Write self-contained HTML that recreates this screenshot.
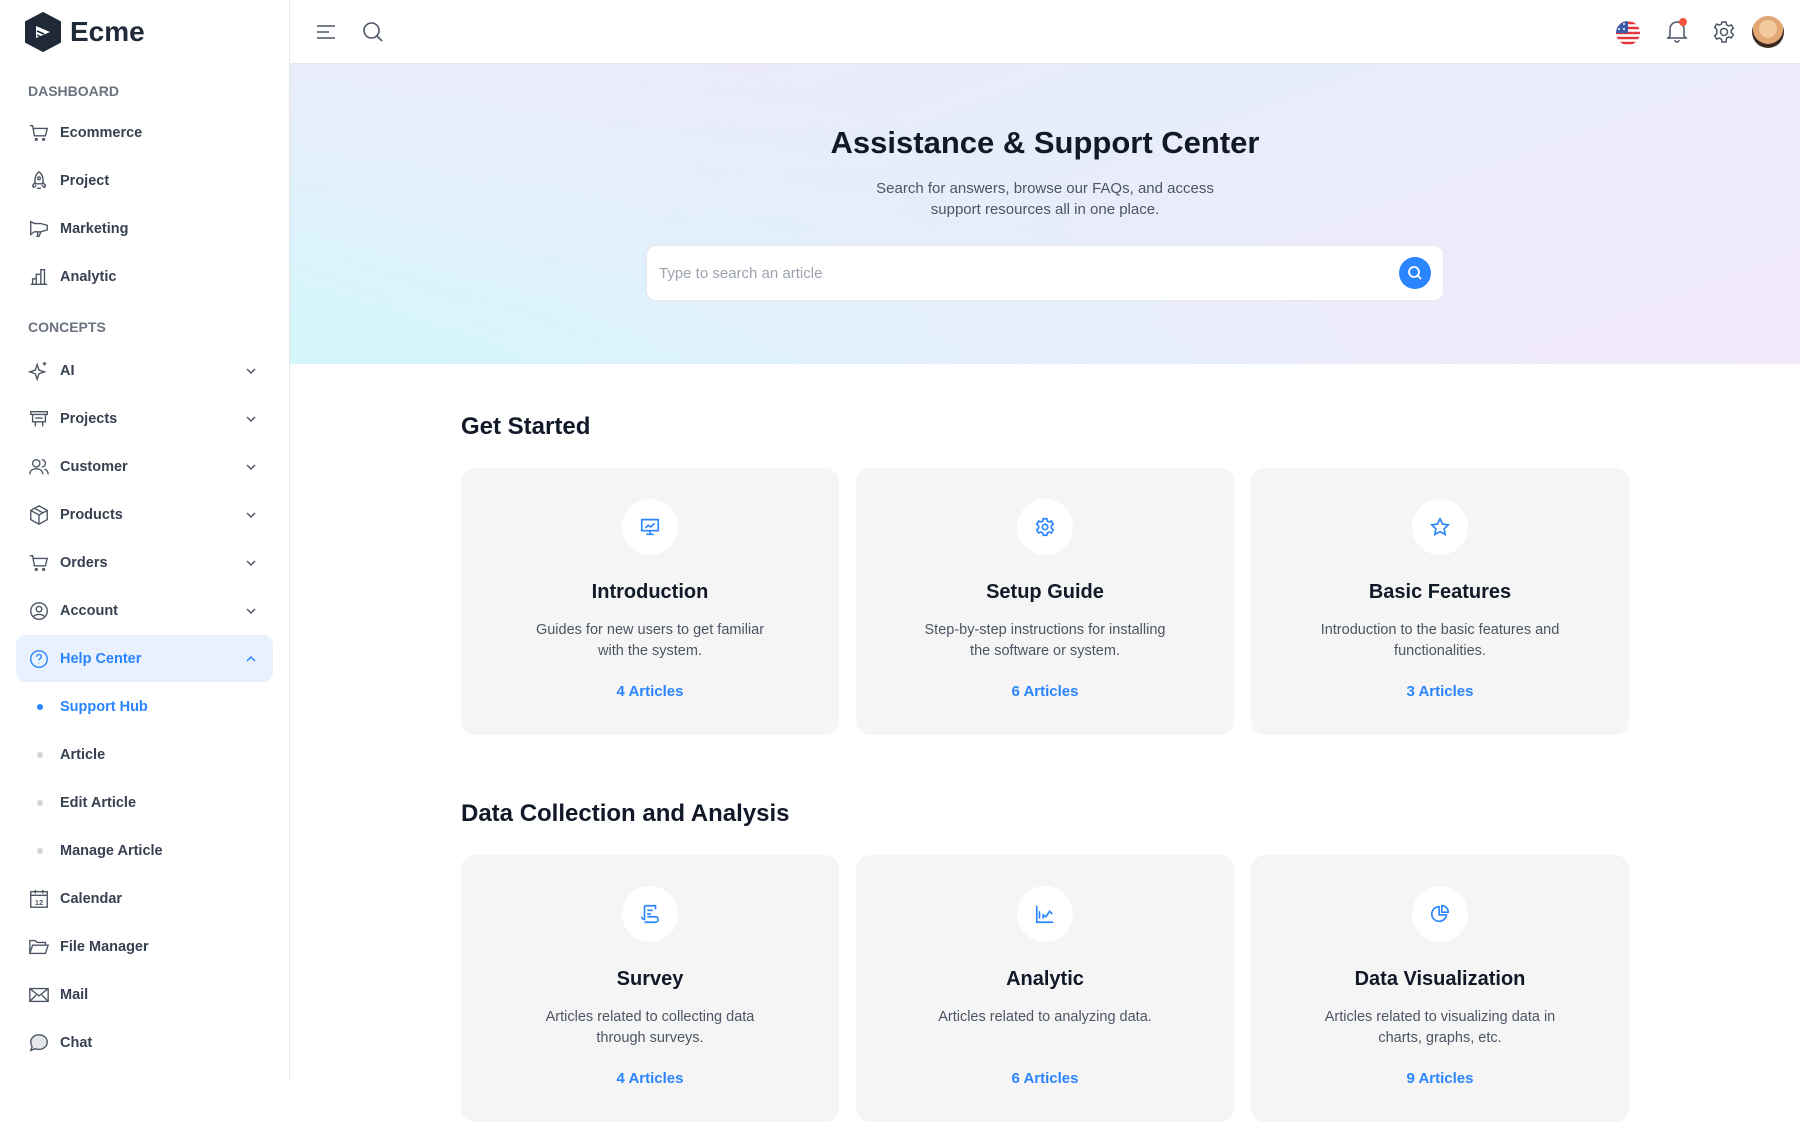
<!DOCTYPE html>
<html><head><meta charset="utf-8"><style>
*{box-sizing:border-box;margin:0;padding:0}
body{width:1800px;height:1080px;overflow:hidden;font-family:"Liberation Sans",sans-serif;background:#fff;position:relative;color:#111827}
.sb{position:absolute;left:0;top:0;width:290px;height:1080px;border-right:1px solid #e5e7eb;background:#fff}
.logo{position:absolute;left:24px;top:12px;display:flex;align-items:center;gap:8px;font-weight:bold;font-size:28px;color:#1f2937}
.sec{position:absolute;left:28px;font-size:14px;font-weight:bold;color:#6b7280;transform:translateY(-50%)}
.it{position:absolute;left:28px;width:240px;height:24px;transform:translateY(-50%);display:flex;align-items:center;font-size:14.5px;font-weight:bold;color:#374151}
.it svg{width:22px;height:22px;margin-right:10px;fill:none;stroke:#4b5563;stroke-width:1.5}
.it .ch{position:absolute;right:10px;width:14px;height:14px;margin:0}
.dot{width:6px;height:6px;border-radius:3px;background:#d1d5db;margin:0 17px 0 9px}
.hl{position:absolute;left:16px;top:635px;width:257px;height:47px;background:#e8f1fd;border-radius:10px}
.hd{position:absolute;left:290px;top:0;right:0;height:64px;border-bottom:1px solid #e5e7eb;background:#fff}
.hero{position:absolute;left:290px;top:64px;right:0;height:300px;background:linear-gradient(160deg,#efe9fb 0%,#e6ecfc 40%,#f2eafb 100%)}
.hero:before{content:"";position:absolute;inset:0;background:linear-gradient(20deg,#d3f6fb 0%,rgba(220,245,252,0.4) 30%,rgba(255,255,255,0) 55%)}
.h1{position:absolute;left:290px;right:0;text-align:center;font-weight:bold;font-size:31px;top:125px;color:#111827}
.sub{position:absolute;left:290px;right:0;text-align:center;top:178px;font-size:15px;line-height:21px;color:#4b5563}
.srch{position:absolute;left:646px;top:245px;width:798px;height:56px;background:#fff;border:1px solid #e5e7eb;border-radius:10px}
.srch span{position:absolute;left:12px;top:19px;font-size:15px;color:#9ca3af}
.srch .b{position:absolute;right:12px;top:11px;width:32px;height:32px;border-radius:16px;background:#2a85ff}
.h2{position:absolute;left:461px;font-size:24px;font-weight:bold;color:#111827;transform:translateY(-50%)}
.card{position:absolute;width:378px;height:267px;background:#f5f5f5;border-radius:14px;text-align:center}
.card .ic{position:absolute;left:161px;top:31px;width:56px;height:56px;border-radius:28px;background:#fff;display:flex;align-items:center;justify-content:center}
.card .ic svg{width:22px;height:22px;fill:none;stroke:#2a85ff;stroke-width:1.8}
.card .t{position:absolute;left:0;right:0;top:113px;font-size:20px;font-weight:bold;color:#111827}
.card .d{position:absolute;left:68px;right:68px;top:152px;font-size:14.5px;line-height:21px;color:#4b5563}
.card .a{position:absolute;left:0;right:0;top:215px;font-size:15px;font-weight:bold;color:#2a85ff}
</style></head><body>
<div class="sb">
<div class="logo"><svg width="38" height="40" viewBox="0 0 38 40"><path d="M19 1L36 10V30L19 39L2 30V10Z" fill="#1f2937" stroke="#1f2937" stroke-width="2" stroke-linejoin="round"/><path d="M12 14L26 20L12 26Z" fill="#fff"/><path d="M13 19l7 3M13 23l4 2" stroke="#1f2937" stroke-width="1.5"/></svg>Ecme</div>
<div class="sec" style="top:91px">DASHBOARD</div>
<div class="it" style="top:133px"><svg viewBox="0 0 24 24"><path d="M2 4h3l2 11h12l2-8H6"/><circle cx="9" cy="19" r="1"/><circle cx="17" cy="19" r="1"/></svg>Ecommerce</div>
<div class="it" style="top:181px"><svg viewBox="0 0 24 24"><path d="M12 2c4 3 5 8 4 13H8C7 10 8 5 12 2zM8 13l-3 4 1 2 3-2M16 13l3 4-1 2-3-2M10 20h4"/><circle cx="12" cy="9" r="1.5"/></svg>Project</div>
<div class="it" style="top:229px"><svg viewBox="0 0 24 24"><path d="M3 4v14l4-3h7l7-2V8l-7-2H7L3 4zM14 15l-2 5h-2l1-5"/></svg>Marketing</div>
<div class="it" style="top:277px"><svg viewBox="0 0 24 24"><path d="M3 20h18M5 20v-6h4v6M9 20V9h5v11M14 20V4h4v16"/></svg>Analytic</div>
<div class="sec" style="top:327px">CONCEPTS</div>
<div class="it" style="top:371px"><svg viewBox="0 0 24 24"><path d="M10 5l2 6 6 2-6 2-2 6-2-6-6-2 6-2zM18 2v4M16 4h4"/></svg>AI<svg class="ch" viewBox="0 0 14 14"><path d="M3 5l4 4 4-4"/></svg></div>
<div class="it" style="top:419px"><svg viewBox="0 0 24 24"><path d="M3 4h18v3H3zM5 7v8h14V7M8 15v5M16 15v5M8 11h8"/></svg>Projects<svg class="ch" viewBox="0 0 14 14"><path d="M3 5l4 4 4-4"/></svg></div>
<div class="it" style="top:467px"><svg viewBox="0 0 24 24"><circle cx="9" cy="8" r="4"/><path d="M2 20c0-4 3-6 7-6s7 2 7 6M15 4a4 4 0 010 8M18 14c2 1 4 3 4 6"/></svg>Customer<svg class="ch" viewBox="0 0 14 14"><path d="M3 5l4 4 4-4"/></svg></div>
<div class="it" style="top:515px"><svg viewBox="0 0 24 24"><path d="M12 2l9 5v10l-9 5-9-5V7zM3 7l9 5 9-5M12 12v10M7 4.5l9 5"/></svg>Products<svg class="ch" viewBox="0 0 14 14"><path d="M3 5l4 4 4-4"/></svg></div>
<div class="it" style="top:563px"><svg viewBox="0 0 24 24"><path d="M2 4h3l2 11h12l2-8H6"/><circle cx="9" cy="19" r="1"/><circle cx="17" cy="19" r="1"/></svg>Orders<svg class="ch" viewBox="0 0 14 14"><path d="M3 5l4 4 4-4"/></svg></div>
<div class="it" style="top:611px"><svg viewBox="0 0 24 24"><circle cx="12" cy="12" r="9"/><circle cx="12" cy="10" r="3"/><path d="M6 18c2-3 10-3 12 0"/></svg>Account<svg class="ch" viewBox="0 0 14 14"><path d="M3 5l4 4 4-4"/></svg></div>
<div class="hl"></div>
<div class="it" style="top:659px;color:#2a85ff"><svg viewBox="0 0 24 24" style="stroke:#2a85ff"><circle cx="12" cy="12" r="9"/><path d="M9.5 9.5a2.5 2.5 0 115 0c0 2-2.5 2-2.5 4M12 17v.5"/></svg>Help Center<svg class="ch" viewBox="0 0 14 14" style="stroke:#2a85ff"><path d="M3 9l4-4 4 4"/></svg></div>
<div class="it" style="top:707px;color:#2a85ff"><span class="dot" style="background:#2a85ff"></span>Support Hub</div>
<div class="it" style="top:755px"><span class="dot"></span>Article</div>
<div class="it" style="top:803px"><span class="dot"></span>Edit Article</div>
<div class="it" style="top:851px"><span class="dot"></span>Manage Article</div>
<div class="it" style="top:899px"><svg viewBox="0 0 24 24"><rect x="3" y="4" width="18" height="17"/><path d="M3 8h18M8 2v4M16 2v4"/><text x="12" y="18.5" font-size="8" text-anchor="middle" fill="#4b5563" stroke="none">12</text></svg>Calendar</div>
<div class="it" style="top:947px"><svg viewBox="0 0 24 24"><path d="M2 19V5h6l2 2h9v3M2 19l3-9h17l-3 9z"/></svg>File Manager</div>
<div class="it" style="top:995px"><svg viewBox="0 0 24 24"><rect x="2" y="5" width="20" height="14"/><path d="M2 5l10 8 10-8M2 19l7-7M22 19l-7-7"/></svg>Mail</div>
<div class="it" style="top:1043px"><svg viewBox="0 0 24 24"><path d="M12 3c5 0 9 3.5 9 8s-4 8-9 8c-1.5 0-3-.3-4-.8L3 20l1.5-4C3.5 14.5 3 13 3 11c0-4.5 4-8 9-8z" fill="#e5e7eb"/></svg>Chat</div>
</div>
<div class="hd">
<svg style="position:absolute;left:26px;top:22px" width="20" height="20" viewBox="0 0 20 20" fill="none" stroke="#4b5563" stroke-width="1.6"><path d="M1 4h18M1 10h12M1 16h18"/></svg>
<svg style="position:absolute;left:72px;top:21px" width="22" height="22" viewBox="0 0 22 22" fill="none" stroke="#4b5563" stroke-width="1.6"><circle cx="9.5" cy="9.5" r="7.5"/><path d="M15 15l5 5"/></svg>
<svg style="position:absolute;left:1325px;top:20px" width="26" height="26" viewBox="0 0 26 26"><defs><clipPath id="c"><circle cx="13" cy="13" r="12"/></clipPath></defs><g clip-path="url(#c)"><rect width="26" height="26" fill="#fff"/><path d="M0 3h26M0 8h26M0 13h26M0 18h26M0 23h26" stroke="#e03a3e" stroke-width="2.6"/><rect width="13" height="13" fill="#3c5aa6"/><g fill="#fff"><circle cx="4" cy="4" r="1"/><circle cx="9" cy="4" r="1"/><circle cx="4" cy="9" r="1"/><circle cx="9" cy="9" r="1"/></g></g></svg>
<svg style="position:absolute;left:1375px;top:18px" width="24" height="26" viewBox="0 0 24 26" fill="none" stroke="#4b5563" stroke-width="1.5"><path d="M5 18V11a7 7 0 0114 0v7l2 2H3zM10 22a2 2 0 004 0"/><circle cx="18" cy="4" r="4" fill="#f5543e" stroke="none"/></svg>
<svg style="position:absolute;left:1422px;top:20px" width="24" height="24" viewBox="0 0 24 24" fill="none" stroke="#4b5563" stroke-width="1.5"><circle cx="12" cy="12" r="3.5"/><path d="M10 2h4l.6 2.8 2 1.1 2.7-1 2 3.4-2.1 1.9v2.4l2.1 1.9-2 3.4-2.7-1-2 1.1L14 22h-4l-.6-2.8-2-1.1-2.7 1-2-3.4 2.1-1.9V9.4L2.7 7.5l2-3.4 2.7 1 2-1.1z"/></svg>
<div style="position:absolute;left:1462px;top:16px;width:32px;height:32px;border-radius:16px;background:radial-gradient(circle at 50% 40%,#f3c9a0 0 35%,#e2a772 36% 60%,#3b2a20 61%)"></div>
</div>
<div class="hero"></div>
<div class="h1">Assistance &amp; Support Center</div>
<div class="sub">Search for answers, browse our FAQs, and access<br>support resources all in one place.</div>
<div class="srch"><span>Type to search an article</span><div class="b"><svg width="32" height="32" viewBox="0 0 32 32" fill="none" stroke="#fff" stroke-width="1.8"><circle cx="15" cy="15" r="5"/><path d="M19 19l3 3"/></svg></div></div>
<div class="h2" style="top:427px">Get Started</div>
<div class="card" style="left:461px;top:468px"><div class="ic"><svg viewBox="0 0 24 24"><rect x="3" y="4" width="18" height="12"/><path d="M7 13l3-3 3 2 4-4M12 16v4M8 20h8M3 4h18"/></svg></div><div class="t">Introduction</div><div class="d">Guides for new users to get familiar with the system.</div><div class="a">4 Articles</div></div>
<div class="card" style="left:856px;top:468px"><div class="ic"><svg viewBox="0 0 24 24"><circle cx="12" cy="12" r="3"/><path d="M10 3h4l.5 2.5 2 1 2.5-1 2 3.4-2 1.8v2.6l2 1.8-2 3.4-2.5-1-2 1L14 21h-4l-.5-2.5-2-1-2.5 1-2-3.4 2-1.8v-2.6l-2-1.8 2-3.4 2.5 1 2-1z"/></svg></div><div class="t">Setup Guide</div><div class="d">Step-by-step instructions for installing the software or system.</div><div class="a">6 Articles</div></div>
<div class="card" style="left:1251px;top:468px"><div class="ic"><svg viewBox="0 0 24 24"><path d="M12 3l2.8 5.8 6.2.8-4.5 4.3 1.1 6.2L12 17.1 6.4 20.1l1.1-6.2L3 9.6l6.2-.8z"/></svg></div><div class="t">Basic Features</div><div class="d">Introduction to the basic features and functionalities.</div><div class="a">3 Articles</div></div>
<div class="h2" style="top:814px">Data Collection and Analysis</div>
<div class="card" style="left:461px;top:855px"><div class="ic"><svg viewBox="0 0 24 24"><path d="M6 3h12v4M6 3v15a3 3 0 01-3-3M6 21h12a3 3 0 000-6H9M9 8h6M9 12h4"/></svg></div><div class="t">Survey</div><div class="d">Articles related to collecting data through surveys.</div><div class="a">4 Articles</div></div>
<div class="card" style="left:856px;top:855px"><div class="ic"><svg viewBox="0 0 24 24"><path d="M3 3v18h18M6 17V9M10 17v-4l3 2 4-6 3 3"/></svg></div><div class="t">Analytic</div><div class="d">Articles related to analyzing data.</div><div class="a">6 Articles</div></div>
<div class="card" style="left:1251px;top:855px"><div class="ic"><svg viewBox="0 0 24 24"><path d="M11 4a8 8 0 108 9h-8z"/><path d="M14 3a7 7 0 017 7h-7z"/></svg></div><div class="t">Data Visualization</div><div class="d">Articles related to visualizing data in charts, graphs, etc.</div><div class="a">9 Articles</div></div>
</body></html>
